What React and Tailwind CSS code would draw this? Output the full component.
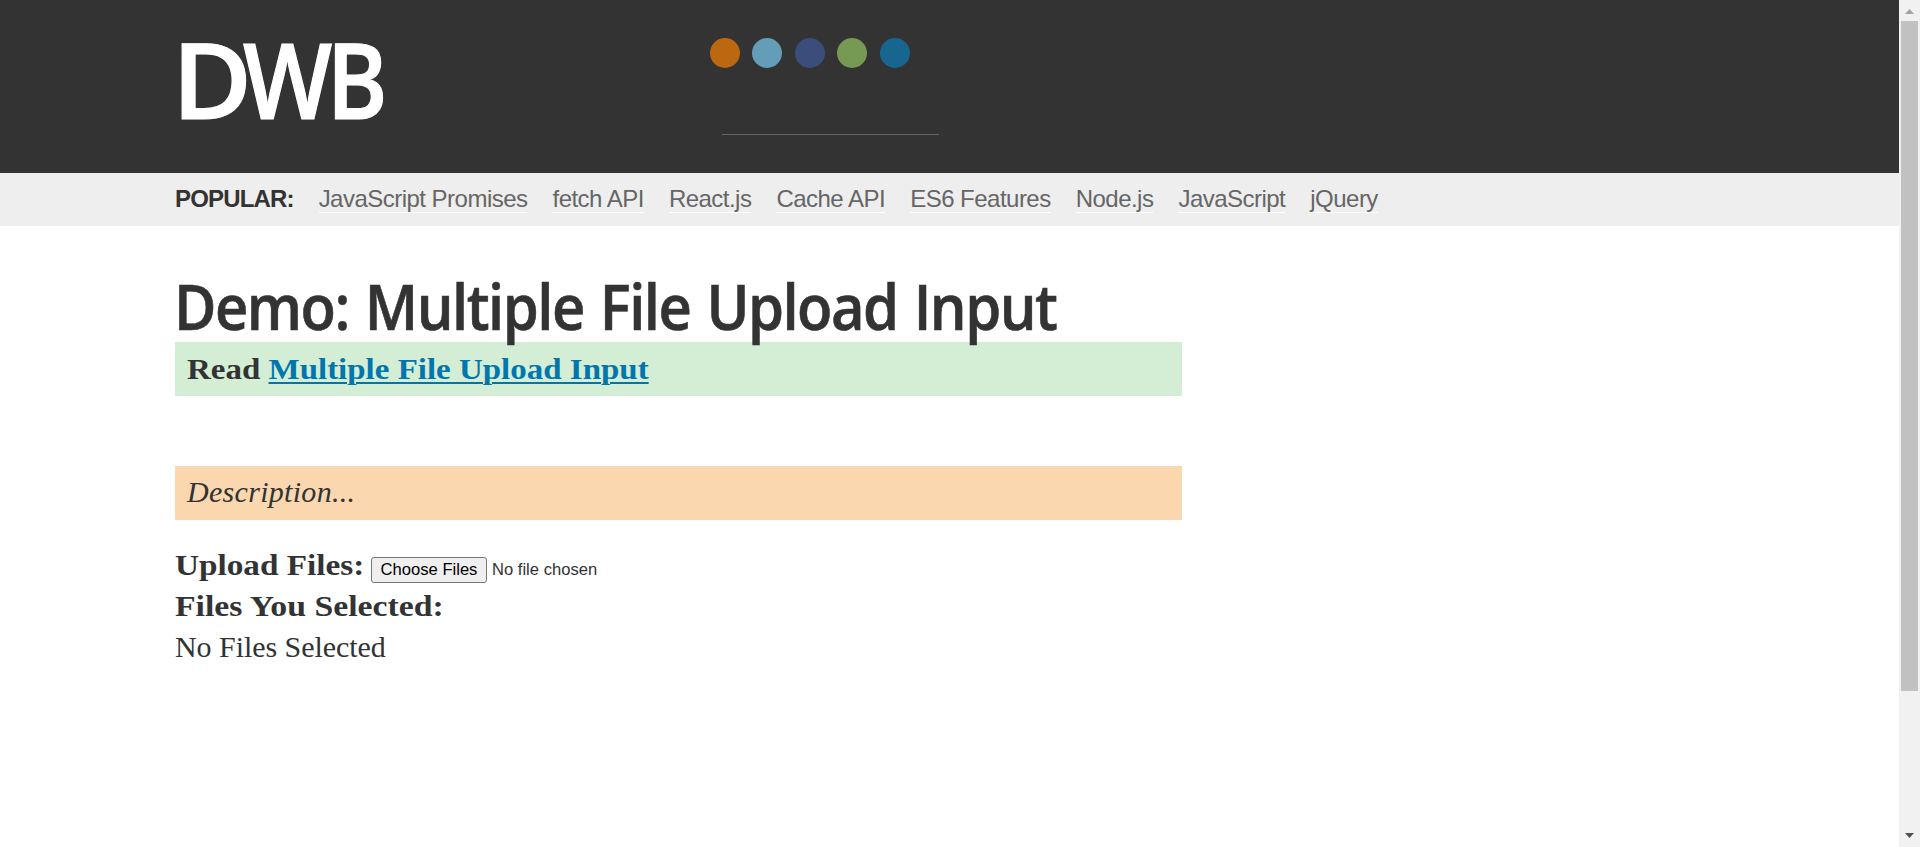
const dots = ['bg-[#bb6810]', 'bg-[#649db7]', 'bg-[#3b4d7a]', 'bg-[#769a54]', 'bg-[#18658f]'];

const links = ['JavaScript Promises', 'fetch API', 'React.js', 'Cache API', 'ES6 Features', 'Node.js', 'JavaScript', 'jQuery'];

function Logo() {
  return (
    <svg width="230" height="173" viewBox="165 0 230 173" fill="#fff" fontSize="106" fontWeight="600" fontFamily="'Open Sans', sans-serif" stroke="#fff" strokeWidth="1.2" role="img" aria-label="DWB">
      <text transform="translate(172 118.5) scale(1.03 0.99)">D</text>
      <text transform="translate(243 118.5) scale(0.89 0.99)">W</text>
      <text transform="translate(326.8 118.5) scale(0.87 0.99)">B</text>
    </svg>
  );
}

function Header() {
  return (
    <header className="flex h-[173px] items-start bg-[#333] pl-[165px]">
      <div className="w-[545px]">
        <Logo />
      </div>
      <div className="pt-[38px]">
        <div className="flex gap-[12.45px]">
          {dots.map((c) => (
            <span key={c} className={`size-[30px] rounded-full ${c}`} />
          ))}
        </div>
        <div className="mt-[66px] ml-3 h-px w-[217px] bg-[#666]" />
      </div>
    </header>
  );
}

function PopularBar() {
  return (
    <nav className="flex h-[53px] items-center gap-[25px] bg-[#eee] pl-[175px] font-['Liberation_Sans',sans-serif] text-[24px] leading-[26px] tracking-[-0.52px] whitespace-nowrap">
      <strong className="border-b border-transparent font-bold tracking-[-0.84px] text-[#333]">POPULAR:</strong>
      {links.map((l) => (
        <a key={l} className="border-b border-white text-[#666]">
          {l}
        </a>
      ))}
    </nav>
  );
}

function Scrollbar() {
  return (
    <div className="flex h-[847px] w-[21px] shrink-0 flex-col items-center bg-[#f1f1f1]">
      <svg className="h-[21px] w-[21px]" viewBox="0 0 21 21" fill="#a3a3a3">
        <path d="M6 14 L10.5 9 L15 14 Z" />
      </svg>
      <div className="h-[670px] w-[17px] bg-[#c1c1c1]" />
      <svg className="mt-auto h-[21px] w-[21px]" viewBox="0 0 21 21" fill="#505050">
        <path d="M6 7 L10.5 12 L15 7 Z" />
      </svg>
    </div>
  );
}

export default function App() {
  return (
    <div className="flex h-[847px] w-[1920px] overflow-hidden bg-white">
      <div className="flex-1">
        <Header />
        <PopularBar />
        <main className="ml-[175px] w-[1007px] pt-11 font-['Liberation_Serif',serif] text-[30px] leading-[41px] text-[#333]">
          <h1 className="-ml-px h-[72px] origin-left scale-x-[0.92] font-['Open_Sans',sans-serif] text-[63px] leading-[72px] font-semibold tracking-[-1.65px] [word-spacing:2.7px] whitespace-nowrap [-webkit-text-stroke:0.6px_#333]">
            Demo: Multiple File Upload Input
          </h1>
          <div className="flex h-[54px] items-center bg-[#d3eed5] px-3 pb-0.5 font-bold whitespace-pre">
            <span className="origin-left scale-x-[1.099]">
              Read <a className="text-[#0076ad] underline decoration-2 underline-offset-[3px]">Multiple File Upload Input</a>
            </span>
          </div>
          <div className="mt-[70px] flex h-[54px] items-center bg-[#fbd7b0] px-3 pb-1 tracking-[0.3px] italic">Description...</div>
          <div className="mt-6 flex h-[41px] items-center whitespace-nowrap">
            <div className="w-[196px]">
              <span className="inline-block origin-left scale-x-[1.108] font-bold">Upload Files:</span>
            </div>
            <span className="mt-[11px] flex items-center font-['Liberation_Sans',sans-serif] text-[16.6px] leading-[22px]">
              <button className="h-[26px] w-[116px] rounded-[3px] border border-[#767676] bg-[#efefef] pb-px leading-[22px] text-black">Choose Files</button>
              <span className="ml-[5px] pb-px leading-[22px]">No file chosen</span>
            </span>
          </div>
          <div className="h-[41px]">
            <span className="inline-block origin-left scale-x-[1.125] font-bold">Files You Selected:</span>
          </div>
          <div className="tracking-[-0.05px]">No Files Selected</div>
        </main>
      </div>
      <Scrollbar />
    </div>
  );
}
